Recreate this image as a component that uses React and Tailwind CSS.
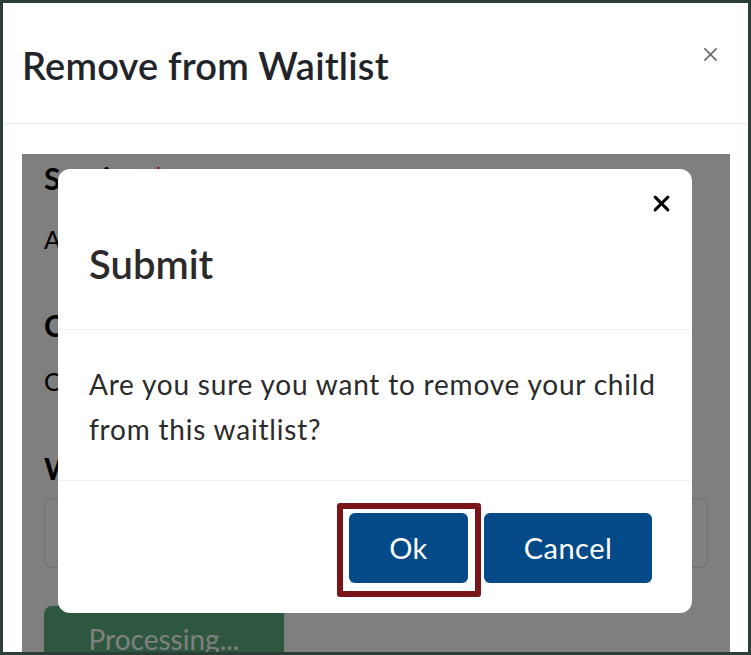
import React from 'react';

const CloseIcon = ({ className, stroke = 2 }) => (
  <svg viewBox="0 0 16 16" className={className} fill="none" stroke="currentColor" strokeWidth={stroke} strokeLinecap="round">
    <path d="M2 2 L14 14 M14 2 L2 14" />
  </svg>
);

const App = () => {
  return (
    <div className="relative w-[751px] h-[655px] overflow-hidden border-[3px] border-[#2b3f38] bg-white font-['Lato','Noto_Sans',sans-serif] text-[#212529]">
      {/* page modal header */}
      <div className="flex items-start justify-between h-[121px] border-b border-[#e9ecef] pl-[19px] pr-[30px]">
        <h1 className="mt-[40px] text-[38px] leading-[44px] font-semibold tracking-[0.2px]">Remove from Waitlist</h1>
        <CloseIcon className="mt-[44px] w-[15px] h-[15px] text-[#6b6b6b]" stroke={1.8} />
      </div>

      {/* page modal body, dimmed */}
      <div className="pt-[30px] pl-[19px] pr-[18px]">
        <div className="relative h-[520px] overflow-hidden bg-white px-[22px] pt-[6px]">
          <h2 className="text-[30px] leading-[36px] font-bold text-black">
            Session <span className="text-red-600">*</span>
          </h2>
          <p className="mt-[25px] text-[25px] leading-[36px] text-black">After School Program</p>
          <h2 className="mt-[50px] text-[30px] leading-[36px] font-bold text-black">Child</h2>
          <p className="mt-[20px] text-[25px] leading-[36px] text-black">Child Name</p>
          <h2 className="mt-[51px] text-[30px] leading-[36px] font-bold text-black">Waitlist Reason</h2>
          <div className="mt-[12px] h-[70px] rounded-[8px] border border-[#dcdcdc]"></div>
          <button className="mt-[38px] w-[240px] h-[66px] rounded-[8px] bg-[#5aae7c] text-white text-[28px] leading-[66px]">
            Processing...
          </button>
          <div className="absolute inset-0 bg-black/50"></div>
        </div>
      </div>

      {/* confirm dialog */}
      <div className="absolute left-[55px] top-[166px] w-[634px] h-[444px] rounded-[12px] bg-white flex flex-col">
        <div className="pt-[26px] pl-[31px] pr-[22px] pb-[41px] border-b border-[#eef0f2]">
          <div className="flex justify-end">
            <CloseIcon className="w-[17px] h-[17px] text-black" stroke={2.8} />
          </div>
          <h3 className="mt-[28px] text-[40px] leading-[48px] font-semibold text-[#2b2b2b]">Submit</h3>
        </div>
        <div className="pt-[32px] pb-[28px] pl-[31px] pr-[20px] border-b border-[#eef0f2]">
          <p className="text-[28px] leading-[45px] tracking-[0.8px] text-[#2b2b2b]">
            Are you sure you want to remove your child from this waitlist?
          </p>
        </div>
        <div className="flex justify-end items-start pt-[22px] pr-[40px]">
          <div className="rounded-[3px] border-[6px] border-[#7a1419] pl-[6px] pr-[7px] pt-[4px] pb-[8px]">
            <button className="block w-[119px] h-[70px] rounded-[6px] bg-[#044a88] text-white text-[29px] tracking-[0.5px]">Ok</button>
          </div>
          <button className="ml-[3px] mt-[10px] w-[168px] h-[70px] rounded-[6px] bg-[#044a88] text-white text-[29px] tracking-[0.5px]">Cancel</button>
        </div>
      </div>
    </div>
  );
};

export default App;
